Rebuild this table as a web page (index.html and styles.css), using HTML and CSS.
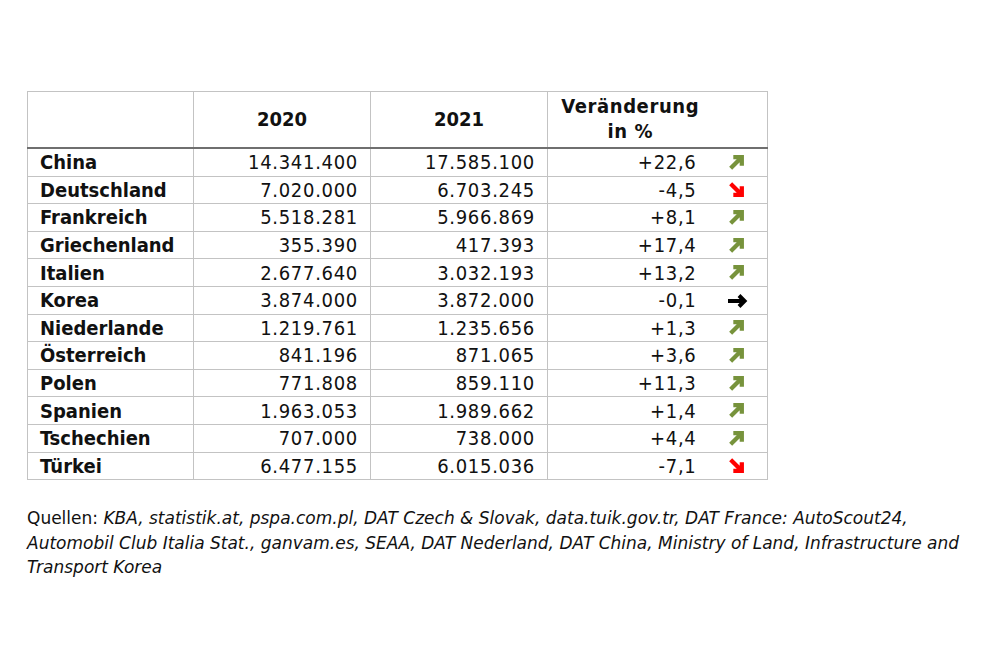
FILE: index.html
```html
<!DOCTYPE html>
<html lang="de">
<head>
<meta charset="utf-8">
<link rel="stylesheet" href="styles.css">
</head>
<body>
<div class="page">
  <table class="stats">
    <colgroup>
      <col class="c-land"><col class="c-num"><col class="c-num"><col class="c-chg"><col class="c-arr">
    </colgroup>
    <thead>
      <tr>
        <th></th>
        <th>2020</th>
        <th>2021</th>
        <th class="chg-head">Veränderung<br>in %</th>
        <th class="arr"></th>
      </tr>
    </thead>
    <tbody>
      <tr><td class="land">China</td><td>14.341.400</td><td>17.585.100</td><td class="chg">+22,6</td><td class="arr"><svg class="ico up" viewBox="0 0 16 16"><path d="M2.5 13.5 L12 4 M5 3 H13 V11"/></svg></td></tr>
      <tr><td class="land">Deutschland</td><td>7.020.000</td><td>6.703.245</td><td class="chg">-4,5</td><td class="arr"><svg class="ico down" viewBox="0 0 16 16"><path d="M2.5 2.5 L12 12 M5 13 H13 V5"/></svg></td></tr>
      <tr><td class="land">Frankreich</td><td>5.518.281</td><td>5.966.869</td><td class="chg">+8,1</td><td class="arr"><svg class="ico up" viewBox="0 0 16 16"><path d="M2.5 13.5 L12 4 M5 3 H13 V11"/></svg></td></tr>
      <tr><td class="land">Griechenland</td><td>355.390</td><td>417.393</td><td class="chg">+17,4</td><td class="arr"><svg class="ico up" viewBox="0 0 16 16"><path d="M2.5 13.5 L12 4 M5 3 H13 V11"/></svg></td></tr>
      <tr><td class="land">Italien</td><td>2.677.640</td><td>3.032.193</td><td class="chg">+13,2</td><td class="arr"><svg class="ico up" viewBox="0 0 16 16"><path d="M2.5 13.5 L12 4 M5 3 H13 V11"/></svg></td></tr>
      <tr><td class="land">Korea</td><td>3.874.000</td><td>3.872.000</td><td class="chg">-0,1</td><td class="arr"><svg class="ico right" viewBox="0 0 20 14"><path d="M0 7 H16 M11 1.5 L16.5 7 L11 12.5"/></svg></td></tr>
      <tr><td class="land">Niederlande</td><td>1.219.761</td><td>1.235.656</td><td class="chg">+1,3</td><td class="arr"><svg class="ico up" viewBox="0 0 16 16"><path d="M2.5 13.5 L12 4 M5 3 H13 V11"/></svg></td></tr>
      <tr><td class="land">Österreich</td><td>841.196</td><td>871.065</td><td class="chg">+3,6</td><td class="arr"><svg class="ico up" viewBox="0 0 16 16"><path d="M2.5 13.5 L12 4 M5 3 H13 V11"/></svg></td></tr>
      <tr><td class="land">Polen</td><td>771.808</td><td>859.110</td><td class="chg">+11,3</td><td class="arr"><svg class="ico up" viewBox="0 0 16 16"><path d="M2.5 13.5 L12 4 M5 3 H13 V11"/></svg></td></tr>
      <tr><td class="land">Spanien</td><td>1.963.053</td><td>1.989.662</td><td class="chg">+1,4</td><td class="arr"><svg class="ico up" viewBox="0 0 16 16"><path d="M2.5 13.5 L12 4 M5 3 H13 V11"/></svg></td></tr>
      <tr><td class="land">Tschechien</td><td>707.000</td><td>738.000</td><td class="chg">+4,4</td><td class="arr"><svg class="ico up" viewBox="0 0 16 16"><path d="M2.5 13.5 L12 4 M5 3 H13 V11"/></svg></td></tr>
      <tr><td class="land">Türkei</td><td>6.477.155</td><td>6.015.036</td><td class="chg">-7,1</td><td class="arr"><svg class="ico down" viewBox="0 0 16 16"><path d="M2.5 2.5 L12 12 M5 13 H13 V5"/></svg></td></tr>
    </tbody>
  </table>
  <p class="sources">Quellen: <em>KBA, statistik.at, pspa.com.pl, DAT Czech &amp; Slovak, data.tuik.gov.tr, DAT France: AutoScout24,<br>Automobil Club Italia Stat., ganvam.es, SEAA, DAT Nederland, DAT China, Ministry of Land, Infrastructure and<br>Transport Korea</em></p>
</div>
</body>
</html>
```

FILE: styles.css
```css
html, body {
  margin: 0;
  padding: 0;
  background: #ffffff;
}

.page {
  padding: 91px 27px 0 27px;
  font-family: "DejaVu Sans Condensed", "DejaVu Sans", sans-serif;
  color: #111111;
}

.stats {
  border-collapse: collapse;
  table-layout: fixed;
  width: 740px;
  font-size: 20px;
}

.c-land { width: 166px; }
.c-num { width: 177px; }
.c-chg { width: 165px; }
.c-arr { width: 55px; }

.stats th,
.stats td {
  border: 1px solid #c3c3c3;
  padding: 0 12px;
}

.stats th {
  height: 53px;
  font-weight: bold;
  text-align: center;
  line-height: 25px;
  border-bottom: 2px solid #6f6f6f;
}

.stats th.chg-head {
  vertical-align: top;
  padding-top: 2px;
  letter-spacing: 0.6px;
  border-right: none;
}

.stats td {
  height: 26.6px;
  line-height: 26px;
  text-align: right;
  letter-spacing: 0.7px;
}

.stats td.land {
  text-align: left;
  font-weight: bold;
  letter-spacing: 0;
}

.stats td.chg {
  border-right: none;
  padding-right: 16px;
}

.stats .arr {
  border-left: none;
  text-align: left;
  padding: 0 0 0 15px;
}

.ico {
  display: block;
  fill: none;
}

.ico.up, .ico.down {
  width: 17px;
  height: 17px;
  stroke-width: 4;
}

.ico.up { stroke: #77933c; }
.ico.down { stroke: #ff0000; }

.ico.right {
  width: 20px;
  height: 14px;
  stroke: #000000;
  stroke-width: 4;
  margin-top: 1px;
}

.sources {
  margin: 26px 0 0 0;
  font-family: "DejaVu Sans", sans-serif;
  font-size: 17px;
  line-height: 24.5px;
}
```
